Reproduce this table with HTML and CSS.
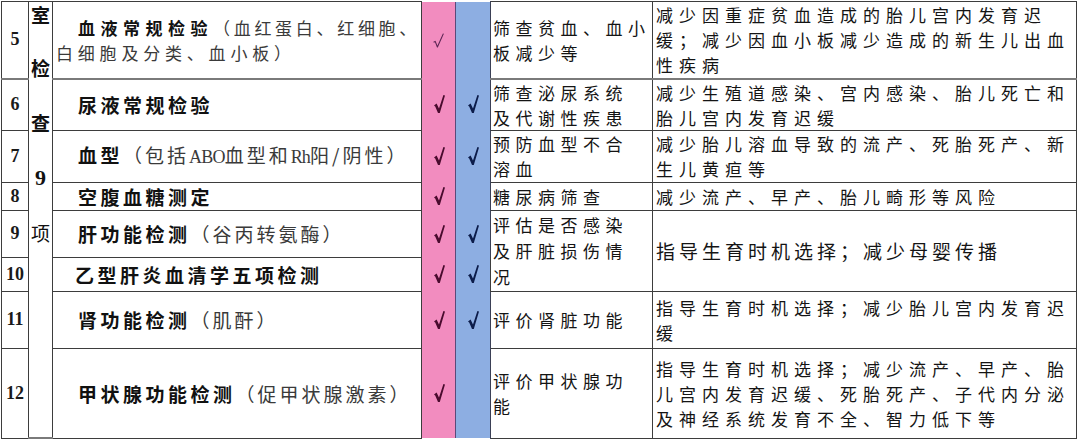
FILE: index.html
```html
<!DOCTYPE html>
<html lang="zh-CN">
<head>
<meta charset="utf-8">
<title>检查项目</title>
<link rel="stylesheet" href="styles.css">
</head>
<body>
<table class="grid">
  <colgroup>
    <col class="c-num"><col class="c-cat"><col class="c-name"><col class="c-pk"><col class="c-bl"><col class="c-scr"><col class="c-desc">
  </colgroup>
  <tr class="r5">
    <td class="num">5</td>
    <td class="cat" rowspan="8">
      <div class="vtext">
        <div class="vc first bold">室</div>
        <div class="vc bold">检</div>
        <div class="vc bold">查</div>
        <div class="vc digit">9</div>
        <div class="vc">项</div>
      </div>
    </td>
    <td class="name multi"><b>血液常规检验</b><span class="paren tight">（血红蛋白、红细胞、</span><br><span class="paren mid">白细胞及分类、血小板）</span></td>
    <td class="pk"><svg class="chk-thin" width="11" height="15" viewBox="0 0 11 15"><path d="M0.6 9.2 L2.2 8.4 L4.4 14 L10.4 0.6" fill="none" stroke="#5b2453" stroke-width="1.1" stroke-linejoin="round"/></svg></td>
    <td class="bl"></td>
    <td class="scr">筛查贫血、血小<br>板减少等</td>
    <td class="desc">减少因重症贫血造成的胎儿宫内发育迟<br>缓；减少因血小板减少造成的新生儿出血<br>性疾病</td>
  </tr>
  <tr class="r6">
    <td class="num">6</td>
    <td class="name"><b>尿液常规检验</b></td>
    <td class="pk"><svg class="chk pkc" width="11" height="18" viewBox="0 0 11 18"><path d="M0 10.4 L2.6 8.6 L5 13.6 L9.4 0 L11 0.6 L5.8 18 L4 18 L1.2 11.4 Z"/></svg></td>
    <td class="bl"><svg class="chk blc" width="11" height="18" viewBox="0 0 11 18"><path d="M0 10.4 L2.6 8.6 L5 13.6 L9.4 0 L11 0.6 L5.8 18 L4 18 L1.2 11.4 Z"/></svg></td>
    <td class="scr">筛查泌尿系统<br>及代谢性疾患</td>
    <td class="desc">减少生殖道感染、宫内感染、胎儿死亡和<br>胎儿宫内发育迟缓</td>
  </tr>
  <tr class="r7">
    <td class="num">7</td>
    <td class="name"><b>血型</b><span class="paren">（包括<span class="lat">ABO</span>血型和<span class="lat">Rh</span>阳/阴性）</span></td>
    <td class="pk"><svg class="chk pkc" width="11" height="18" viewBox="0 0 11 18"><path d="M0 10.4 L2.6 8.6 L5 13.6 L9.4 0 L11 0.6 L5.8 18 L4 18 L1.2 11.4 Z"/></svg></td>
    <td class="bl"><svg class="chk blc" width="11" height="18" viewBox="0 0 11 18"><path d="M0 10.4 L2.6 8.6 L5 13.6 L9.4 0 L11 0.6 L5.8 18 L4 18 L1.2 11.4 Z"/></svg></td>
    <td class="scr">预防血型不合<br>溶血</td>
    <td class="desc">减少胎儿溶血导致的流产、死胎死产、新<br>生儿黄疸等</td>
  </tr>
  <tr class="r8">
    <td class="num">8</td>
    <td class="name"><b>空腹血糖测定</b></td>
    <td class="pk"><svg class="chk pkc" width="11" height="18" viewBox="0 0 11 18"><path d="M0 10.4 L2.6 8.6 L5 13.6 L9.4 0 L11 0.6 L5.8 18 L4 18 L1.2 11.4 Z"/></svg></td>
    <td class="bl"></td>
    <td class="scr">糖尿病筛查</td>
    <td class="desc">减少流产、早产、胎儿畸形等风险</td>
  </tr>
  <tr class="r9">
    <td class="num">9</td>
    <td class="name"><b>肝功能检测</b><span class="paren">（谷丙转氨酶）</span></td>
    <td class="pk"><svg class="chk pkc" width="11" height="18" viewBox="0 0 11 18"><path d="M0 10.4 L2.6 8.6 L5 13.6 L9.4 0 L11 0.6 L5.8 18 L4 18 L1.2 11.4 Z"/></svg></td>
    <td class="bl"><svg class="chk blc" width="11" height="18" viewBox="0 0 11 18"><path d="M0 10.4 L2.6 8.6 L5 13.6 L9.4 0 L11 0.6 L5.8 18 L4 18 L1.2 11.4 Z"/></svg></td>
    <td class="scr loose" rowspan="2">评估是否感染<br>及肝脏损伤情<br>况</td>
    <td class="desc single" rowspan="2">指导生育时机选择；减少母婴传播</td>
  </tr>
  <tr class="r10">
    <td class="num">10</td>
    <td class="name shift"><b>乙型肝炎血清学五项检测</b></td>
    <td class="pk"><svg class="chk pkc" width="11" height="18" viewBox="0 0 11 18"><path d="M0 10.4 L2.6 8.6 L5 13.6 L9.4 0 L11 0.6 L5.8 18 L4 18 L1.2 11.4 Z"/></svg></td>
    <td class="bl"><svg class="chk blc" width="11" height="18" viewBox="0 0 11 18"><path d="M0 10.4 L2.6 8.6 L5 13.6 L9.4 0 L11 0.6 L5.8 18 L4 18 L1.2 11.4 Z"/></svg></td>
  </tr>
  <tr class="r11">
    <td class="num">11</td>
    <td class="name"><b>肾功能检测</b><span class="paren">（肌酐）</span></td>
    <td class="pk"><svg class="chk pkc" width="11" height="18" viewBox="0 0 11 18"><path d="M0 10.4 L2.6 8.6 L5 13.6 L9.4 0 L11 0.6 L5.8 18 L4 18 L1.2 11.4 Z"/></svg></td>
    <td class="bl"><svg class="chk blc" width="11" height="18" viewBox="0 0 11 18"><path d="M0 10.4 L2.6 8.6 L5 13.6 L9.4 0 L11 0.6 L5.8 18 L4 18 L1.2 11.4 Z"/></svg></td>
    <td class="scr">评价肾脏功能</td>
    <td class="desc">指导生育时机选择；减少胎儿宫内发育迟<br>缓</td>
  </tr>
  <tr class="r12">
    <td class="num">12</td>
    <td class="name"><b>甲状腺功能检测</b><span class="paren">（促甲状腺激素）</span></td>
    <td class="pk"><svg class="chk pkc" width="11" height="18" viewBox="0 0 11 18"><path d="M0 10.4 L2.6 8.6 L5 13.6 L9.4 0 L11 0.6 L5.8 18 L4 18 L1.2 11.4 Z"/></svg></td>
    <td class="bl"></td>
    <td class="scr">评价甲状腺功<br>能</td>
    <td class="desc">指导生育时机选择；减少流产、早产、胎<br>儿宫内发育迟缓、死胎死产、子代内分泌<br>及神经系统发育不全、智力低下等</td>
  </tr>
</table>
</body>
</html>
```

FILE: styles.css
```css
html, body {
  margin: 0;
  padding: 0;
  background: #ffffff;
}

body {
  font-family: "Noto Sans CJK SC", "Noto Sans CJK JP", sans-serif;
  color: #141414;
}

.grid {
  border-collapse: collapse;
  table-layout: fixed;
  width: 1075px;
  margin: 1px 0 0 1px;
}

.c-num { width: 27px; }
.c-cat { width: 24px; }
.c-name { width: 369px; }
.c-pk { width: 34px; }
.c-bl { width: 35px; }
.c-scr { width: 162px; }
.c-desc { width: 424px; }

.grid td {
  border: 1px solid #3d3d3d;
  padding: 0;
  vertical-align: middle;
  white-space: nowrap;
  overflow: hidden;
  line-height: 25px;
}

.r5 { height: 77px; }
.r6 { height: 51px; }
.r7 { height: 52px; }
.r8 { height: 28px; }
.r9 { height: 47px; }
.r10 { height: 34px; }
.r11 { height: 57px; }
.r12 { height: 90px; }

.r5 td { border-bottom: 2px solid #7a7a7a; }

.num {
  font-family: "Liberation Serif", serif;
  font-weight: bold;
  font-size: 18px;
  text-align: center;
  color: #1a1a1a;
}

.cat {
  vertical-align: top !important;
  text-align: center;
}

.vtext {
  font-size: 19px;
  color: #111;
}

.vc {
  line-height: 55px;
}

.vc.first {
  line-height: 26px;
  margin-bottom: 12px;
}

.vc.bold { font-weight: bold; }

.vc.digit {
  font-family: "Liberation Serif", serif;
  font-weight: bold;
  font-size: 22px;
}

.name {
  padding-left: 3px !important;
  text-indent: 22px;
  font-size: 19px;
  letter-spacing: 3.5px;
}

.name.multi {
  font-size: 17px;
  letter-spacing: 5.5px;
}

.name.shift { text-indent: 19px; }

.name b {
  font-weight: bold;
  color: #111;
}

.paren {
  font-weight: normal;
  color: #3a3a3a;
  letter-spacing: 3px;
}

.name.multi .paren.tight { letter-spacing: 3.7px; }
.name.multi .paren.mid { letter-spacing: 4.8px; }

.lat {
  font-family: "Liberation Serif", serif;
  font-size: 18px;
  letter-spacing: -0.8px;
}

.pk {
  background: #f28cbf;
  border-top: none !important;
  border-bottom: none !important;
  border-left-color: #8a4a6a !important;
  border-right-color: #5a4a7a !important;
  text-align: center;
}

.bl {
  background: #8daee2;
  border-top: none !important;
  border-bottom: none !important;
  border-right-color: #3a3f55 !important;
  text-align: center;
}

.chk, .chk-thin {
  display: block;
  margin: 0 auto;
}

.pk .chk { position: relative; left: 1px; }

.pkc { fill: #4a0b2e; }
.blc { fill: #0c1c4a; }

.scr {
  padding-left: 2px !important;
  font-size: 17px;
  letter-spacing: 5.5px;
  color: #141414;
}

.scr.loose { line-height: 26px !important; }

.desc {
  padding-left: 3px !important;
  font-size: 17px;
  letter-spacing: 6px;
  color: #141414;
}

.desc.single {
  font-size: 19px;
  letter-spacing: 4px;
}
```
